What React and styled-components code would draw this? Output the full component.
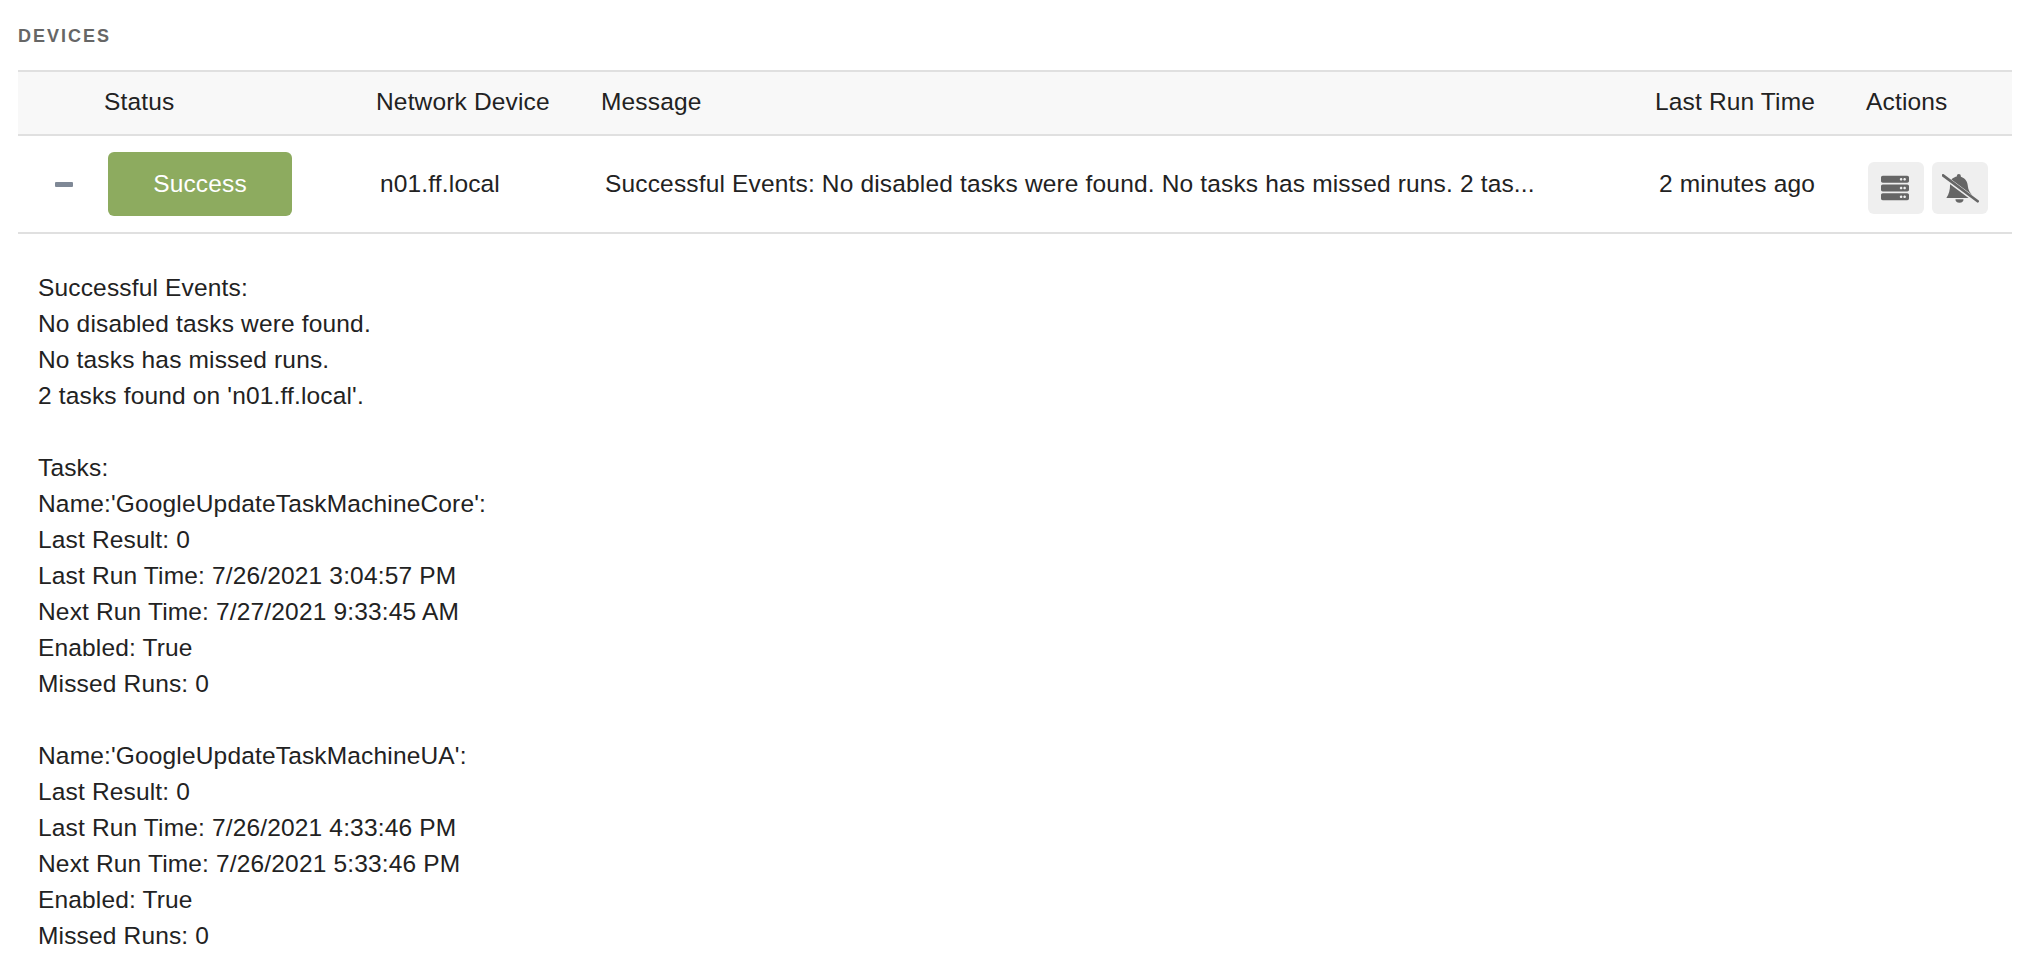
import React from "react";
import styled, { createGlobalStyle } from "styled-components";
import { FaServer } from "react-icons/fa";

const Global = createGlobalStyle`
  html, body { margin: 0; padding: 0; background: #fff; height: 100%; overflow: hidden; }
  body { font-family: "Liberation Sans", Arial, sans-serif; color: #222; }
`;

const Page = styled.div`
  padding: 0 10px 0 18px;
  height: 962px;
  box-sizing: border-box;
`;

const Title = styled.h2`
  margin: 0;
  height: 70px;
  padding-top: 26px;
  box-sizing: border-box;
  font-size: 18px;
  line-height: 20px;
  font-weight: 700;
  letter-spacing: 2px;
  color: #666;
`;

const columns = "82px 272px 225px 1fr 211px 150px";

const HeaderRow = styled.div`
  display: grid;
  grid-template-columns: ${columns};
  align-items: center;
  height: 66px;
  padding-bottom: 2px;
  box-sizing: border-box;
  background: #f8f8f8;
  border-top: 2px solid #e0e0e0;
  border-bottom: 2px solid #e0e0e0;
`;

const HeaderCell = styled.div`
  padding-left: 4px;
  font-size: 24.5px;
  letter-spacing: 0.16px;
  color: #222;
  white-space: nowrap;
`;

const DataRow = styled.div`
  display: grid;
  grid-template-columns: ${columns};
  align-items: center;
  height: 98px;
  box-sizing: border-box;
  border-bottom: 2px solid #e0e0e0;
`;

const DataCell = styled.div`
  padding-left: 8px;
  font-size: 24.5px;
  letter-spacing: 0.16px;
  white-space: nowrap;
  overflow: hidden;
`;

const ExpanderCell = styled.div`
  display: flex;
  justify-content: flex-end;
  padding-right: 27px;
`;

const Minus = styled.span`
  display: block;
  width: 18px;
  height: 5px;
  border-radius: 1px;
  background: #7f8896;
`;

const StatusBadge = styled.div`
  display: flex;
  align-items: center;
  justify-content: center;
  width: 184px;
  height: 64px;
  border-radius: 6px;
  background: #8dab5f;
  color: #fff;
  font-size: 24.5px;
`;

const Actions = styled.div`
  display: flex;
  gap: 8px;
  padding-left: 6px;
  margin-top: 8px;
`;

const ActionButton = styled.button`
  display: flex;
  align-items: center;
  justify-content: center;
  width: 56px;
  height: 52px;
  padding: 0;
  border: 0;
  border-radius: 6px;
  background: #efefef;
  color: #666;
`;

const ServerGlyph = styled(FaServer)`
  margin-right: 3px;
`;

const BellSlashIcon = () => (
  <svg width="37" height="29" viewBox="0 0 110 86" aria-hidden="true">
    <path
      fill="currentColor"
      d="M28 16C33 10 40 8 44 7L44 6A6 6 0 0 1 56 6L56 8C70 12 76 24 77 37C78 47 82 54 90 62Z"
    />
    <path fill="currentColor" d="M24 30L79 71H13C21 60 24 46 24 30Z" />
    <path fill="currentColor" d="M40 75H64A12 10 0 0 1 40 75Z" />
    <path stroke="currentColor" strokeWidth="8" strokeLinecap="round" fill="none" d="M3 4L106 81" />
  </svg>
);

const Details = styled.div`
  padding: 36px 0 0 20px;
  font-size: 24.5px;
  letter-spacing: 0.16px;
  line-height: 36px;
  color: #222;
  white-space: pre-line;
`;

const detailText = `Successful Events:
No disabled tasks were found.
No tasks has missed runs.
2 tasks found on 'n01.ff.local'.

Tasks:
Name:'GoogleUpdateTaskMachineCore':
Last Result: 0
Last Run Time: 7/26/2021 3:04:57 PM
Next Run Time: 7/27/2021 9:33:45 AM
Enabled: True
Missed Runs: 0

Name:'GoogleUpdateTaskMachineUA':
Last Result: 0
Last Run Time: 7/26/2021 4:33:46 PM
Next Run Time: 7/26/2021 5:33:46 PM
Enabled: True
Missed Runs: 0`;

export default function App() {
  return (
    <Page>
      <Global />
      <Title>DEVICES</Title>
      <HeaderRow>
        <div />
        <HeaderCell>Status</HeaderCell>
        <HeaderCell>Network Device</HeaderCell>
        <HeaderCell>Message</HeaderCell>
        <HeaderCell>Last Run Time</HeaderCell>
        <HeaderCell>Actions</HeaderCell>
      </HeaderRow>
      <DataRow>
        <ExpanderCell><Minus /></ExpanderCell>
        <DataCell><StatusBadge>Success</StatusBadge></DataCell>
        <DataCell>n01.ff.local</DataCell>
        <DataCell>Successful Events: No disabled tasks were found. No tasks has missed runs. 2 tas...</DataCell>
        <DataCell>2 minutes ago</DataCell>
        <Actions>
          <ActionButton aria-label="Details"><ServerGlyph size={28} /></ActionButton>
          <ActionButton aria-label="Mute"><BellSlashIcon /></ActionButton>
        </Actions>
      </DataRow>
      <Details>{detailText}</Details>
    </Page>
  );
}
